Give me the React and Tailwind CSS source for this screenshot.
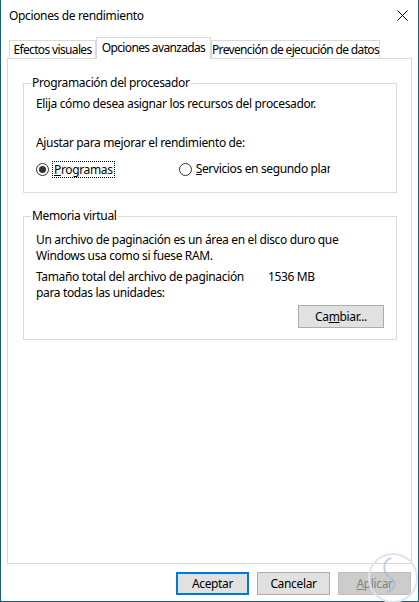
import React from "react";

const font = "font-['Segoe_UI','Noto_Sans',sans-serif] tracking-[-0.35px]";

function Radio({ checked }) {
  return (
    <span className="w-[13px] h-[13px] rounded-full border border-[#333] bg-white flex items-center justify-center shrink-0">
      {checked && <span className="w-[7px] h-[7px] rounded-full bg-[#333]" />}
    </span>
  );
}

function Btn({ children, def, disabled }) {
  return (
    <div
      className={
        "w-[73px] h-[23px] flex items-center justify-center " +
        (def
          ? "border-2 border-[#0078d7] bg-[#e1e1e1] text-black"
          : disabled
          ? "border border-[#bfbfbf] bg-[#cccccc] text-[#838383]"
          : "border border-[#adadad] bg-[#e1e1e1] text-black")
      }
    >
      {children}
    </div>
  );
}

export default function App() {
  return (
    <div className={"relative w-[419px] h-[602px] bg-white border-x border-b border-[#1b5d78] flex flex-col text-[12px] leading-[16px] text-black " + font}>
      {/* Title bar */}
      <div className="h-[37px] flex items-start justify-between pt-[8px] pl-[8px] pr-[10px]">
        <span className="text-[12px]">Opciones de rendimiento</span>
        <svg width="11" height="11" viewBox="0 0 11 11" className="mt-[2px]">
          <path d="M0.5 0.5 L10.5 10.5 M10.5 0.5 L0.5 10.5" stroke="#000" strokeWidth="1" />
        </svg>
      </div>

      {/* Tabs */}
      <div className="flex items-end h-[21px] pl-[8px] relative z-10 whitespace-nowrap tracking-[-0.65px]">
        <div className="w-[87px] h-[18px] border border-b-0 border-[#d9d9d9] bg-white flex items-center justify-center">
          Efectos visuales
        </div>
        <div className="w-[115px] h-[22px] -mb-px border border-b-0 border-[#d9d9d9] bg-white flex items-start justify-center pt-[2px]">
          Opciones avanzadas
        </div>
        <div className="w-[169px] h-[18px] border border-b-0 border-[#d9d9d9] bg-white flex items-center justify-center">
          Prevención de ejecución de datos
        </div>
      </div>

      {/* Panel */}
      <div className="mx-[6px] h-[506px] border border-[#d9d9d9] bg-white flex flex-col px-[15px] pr-[14px]">
        <fieldset className="mt-[16px] border border-[#dcdcdc] pl-[12px] pb-[15px]">
          <legend className="-ml-[5px] px-[1px]">Programación del procesador</legend>
          <div className="mt-[5px]">Elija cómo desea asignar los recursos del procesador.</div>
          <div className="mt-[23px]">Ajustar para mejorar el rendimiento de:</div>
          <div className="mt-[10px] flex items-center h-[16px] whitespace-nowrap">
            <Radio checked />
            <span className="ml-[3px] px-[1px] border border-dotted border-black leading-[15px]">
              <span className="underline">P</span>rogramas
            </span>
            <span className="ml-[64px]">
              <Radio />
            </span>
            <span className="ml-[4px] w-[134px] overflow-hidden whitespace-nowrap">
              <span className="underline">S</span>ervicios en segundo plano
            </span>
          </div>
        </fieldset>

        <fieldset className="mt-[15px] border border-[#dcdcdc] pl-[12px] pr-[12px] pb-[11px]">
          <legend className="-ml-[5px] px-[1px]">Memoria virtual</legend>
          <div className="mt-[8px]">
            Un archivo de paginación es un área en el disco duro que
            <br />
            Windows usa como si fuese RAM.
          </div>
          <div className="mt-[5px] grid grid-cols-[232px_1fr]">
            <div>
              Tamaño total del archivo de paginación
              <br />
              para todas las unidades:
            </div>
            <div>1536 MB</div>
          </div>
          <div className="mt-[4px] flex justify-end">
            <div className="w-[86px] h-[23px] border border-[#adadad] bg-[#e1e1e1] flex items-center justify-center">
              <span>
                Ca<span className="underline">m</span>biar...
              </span>
            </div>
          </div>
        </fieldset>
      </div>

      {/* Buttons */}
      <div className="mt-[8px] flex justify-end gap-[8px] pr-[7px]">
        <Btn def>Aceptar</Btn>
        <Btn>Cancelar</Btn>
        <Btn disabled>
          <span>
            <span className="underline">A</span>plicar
          </span>
        </Btn>
      </div>

      {/* watermark */}
      <svg className="absolute left-[360px] top-[548px] pointer-events-none" width="58" height="54" viewBox="0 0 58 54">
        <circle cx="32" cy="30" r="24" fill="none" stroke="#dfe5ee" strokeWidth="2" />
        <path d="M30 10 C20 14 22 26 30 30 C36 34 34 42 26 44" fill="none" stroke="#9fb0d6" strokeWidth="2" opacity="0.6" />
      </svg>
    </div>
  );
}
